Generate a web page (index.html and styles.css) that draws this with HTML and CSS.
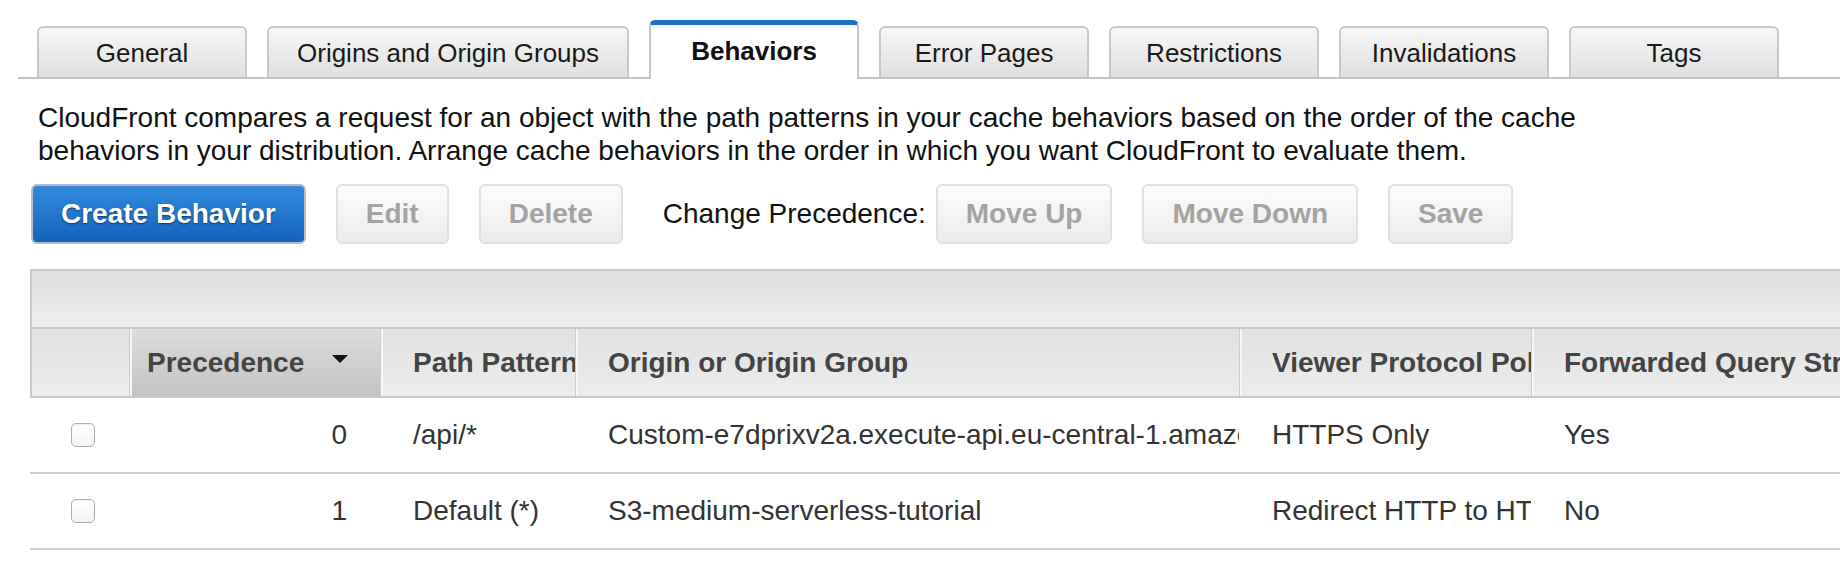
FILE: index.html
```html
<!DOCTYPE html>
<html lang="en">
<head>
<meta charset="utf-8">
<title>CloudFront Behaviors</title>
<link rel="stylesheet" href="styles.css">
</head>
<body>
<div class="page">
  <nav class="tabs">
    <div class="tab">General</div>
    <div class="tab">Origins and Origin Groups</div>
    <div class="tab active">Behaviors</div>
    <div class="tab">Error Pages</div>
    <div class="tab">Restrictions</div>
    <div class="tab">Invalidations</div>
    <div class="tab">Tags</div>
  </nav>

  <p class="intro">CloudFront compares a request for an object with the path patterns in your cache behaviors based on the order of the cache behaviors in your distribution. Arrange cache behaviors in the order in which you want CloudFront to evaluate them.</p>

  <div class="toolbar">
    <button class="btn primary">Create Behavior</button>
    <button class="btn" disabled>Edit</button>
    <button class="btn" disabled>Delete</button>
    <span class="label">Change Precedence:</span>
    <button class="btn" disabled>Move Up</button>
    <button class="btn" disabled>Move Down</button>
    <button class="btn" disabled>Save</button>
  </div>

  <div class="grid">
    <div class="band"></div>
    <div class="hrow">
      <div class="hcell c-check"></div>
      <div class="hcell c-prec sorted"><span>Precedence</span><span class="arrow"></span></div>
      <div class="hcell c-path"><span class="clip">Path Pattern</span></div>
      <div class="hcell c-origin"><span class="clip">Origin or Origin Group</span></div>
      <div class="hcell c-viewer"><span class="clip">Viewer Protocol Policy</span></div>
      <div class="hcell c-fwd"><span class="clip">Forwarded Query Strings</span></div>
    </div>
    <div class="row">
      <div class="cell c-check"><input type="checkbox" class="cb"></div>
      <div class="cell c-prec num">0</div>
      <div class="cell c-path"><span class="clip">/api/*</span></div>
      <div class="cell c-origin"><span class="clip">Custom-e7dprixv2a.execute-api.eu-central-1.amazonaws.com</span></div>
      <div class="cell c-viewer"><span class="clip">HTTPS Only</span></div>
      <div class="cell c-fwd"><span class="clip">Yes</span></div>
    </div>
    <div class="row">
      <div class="cell c-check"><input type="checkbox" class="cb"></div>
      <div class="cell c-prec num">1</div>
      <div class="cell c-path"><span class="clip">Default (*)</span></div>
      <div class="cell c-origin"><span class="clip">S3-medium-serverless-tutorial</span></div>
      <div class="cell c-viewer"><span class="clip">Redirect HTTP to HTTPS</span></div>
      <div class="cell c-fwd"><span class="clip">No</span></div>
    </div>
  </div>
</div>
</body>
</html>
```

FILE: styles.css
```css
html, body {
  margin: 0;
  padding: 0;
  background: #ffffff;
  overflow: hidden;
}

body {
  font-family: "Liberation Sans", Arial, Helvetica, sans-serif;
  color: #111111;
  width: 1840px;
  height: 578px;
}

.page {
  width: 1840px;
}

/* ---------- tabs ---------- */
.tabs {
  display: flex;
  align-items: flex-end;
  gap: 20px;
  margin-left: 18px;
  padding: 20px 0 0 19px;
  border-bottom: 2px solid #c3c3c3;
}

.tab {
  box-sizing: border-box;
  min-width: 210px;
  height: 51px;
  padding: 0 28px;
  border: 2px solid #c8c8c8;
  border-bottom: none;
  border-radius: 6px 6px 0 0;
  background: linear-gradient(#f8f8f8, #dfdfdf);
  font-size: 26px;
  line-height: 50px;
  text-align: center;
  color: #1a1a1a;
  white-space: nowrap;
}

.tab.active {
  height: 59px;
  margin-bottom: -2px;
  border-top: 5px solid #1e6fcd;
  background: #ffffff;
  font-weight: bold;
  line-height: 52px;
  color: #111111;
  position: relative;
}

/* ---------- intro ---------- */
.intro {
  margin: 22px 0 0 38px;
  max-width: 1600px;
  font-size: 28px;
  line-height: 33px;
  color: #111111;
}

/* ---------- toolbar ---------- */
.toolbar {
  display: flex;
  align-items: center;
  gap: 30px;
  margin-top: 17px;
  padding-left: 31px;
}

.btn {
  box-sizing: border-box;
  height: 60px;
  padding: 0 28px;
  border: 2px solid #e0e0e0;
  border-radius: 6px;
  background: linear-gradient(#fcfcfc, #ececec);
  font-family: "Liberation Sans", Arial, Helvetica, sans-serif;
  font-size: 28px;
  font-weight: bold;
  color: #a3a3a3;
  white-space: nowrap;
}

.btn.primary {
  border-color: #b9bcc1;
  background: linear-gradient(#318add, #1463bc);
  color: #ffffff;
  text-shadow: 0 1px 2px rgba(0, 0, 0, 0.55);
}

.label {
  margin-left: 10px;
  margin-right: -20px;
  font-size: 28px;
  color: #111111;
  white-space: nowrap;
}

/* ---------- grid ---------- */
.grid {
  margin: 25px 0 0 30px;
  width: 2300px;
  border-top: 2px solid #c9c9c9;
}

.band {
  height: 56px;
  border-left: 2px solid #c9c9c9;
  border-bottom: 2px solid #c9c9c9;
  background: linear-gradient(#dfdfdf, #eeeeee);
}

.hrow {
  display: flex;
  height: 67px;
  border-left: 2px solid #c9c9c9;
  border-bottom: 2px solid #c9c9c9;
  background: linear-gradient(#e1e1e1, #ececec);
}

.row {
  display: flex;
  height: 74px;
  border-bottom: 2px solid #d0d0d0;
}

.hcell, .cell {
  box-sizing: border-box;
  flex: none;
  display: flex;
  align-items: center;
  overflow: hidden;
  white-space: nowrap;
  font-size: 28px;
}

.clip {
  display: block;
  min-width: 0;
  flex: 1 1 auto;
  overflow: hidden;
  white-space: nowrap;
}

.hcell {
  font-weight: bold;
  color: #444444;
  padding-left: 32px;
  border-left: 1px solid #cbcbcb;
  box-shadow: inset 2px 0 0 #f7f7f7;
}

.hcell.c-check {
  width: 97px;
  border-left: none;
  box-shadow: none;
  padding: 0;
}

.hcell.sorted {
  padding-left: 17px;
  background: linear-gradient(#dcdcdc, #c3c3c3);
}

.arrow {
  width: 0;
  height: 0;
  margin-left: 28px;
  margin-top: -8px;
  border-left: 8px solid transparent;
  border-right: 8px solid transparent;
  border-top: 8px solid #111111;
}

.cell {
  color: #333333;
  padding-left: 33px;
}

.cell.c-check {
  width: 99px;
  padding-left: 41px;
}

.c-prec { width: 251px; }
.c-path { width: 195px; }
.c-origin { width: 664px; }
.c-viewer { width: 292px; }
.c-fwd { width: 400px; }

.cell.num {
  justify-content: flex-end;
  padding-left: 0;
  padding-right: 33px;
}

.cb {
  appearance: none;
  -webkit-appearance: none;
  box-sizing: border-box;
  width: 24px;
  height: 24px;
  margin: 0;
  border: 1px solid #aeaeae;
  border-radius: 5px;
  background: linear-gradient(#ffffff, #f3f3f3);
  box-shadow: inset 0 1px 1px rgba(0, 0, 0, 0.06);
}
```
